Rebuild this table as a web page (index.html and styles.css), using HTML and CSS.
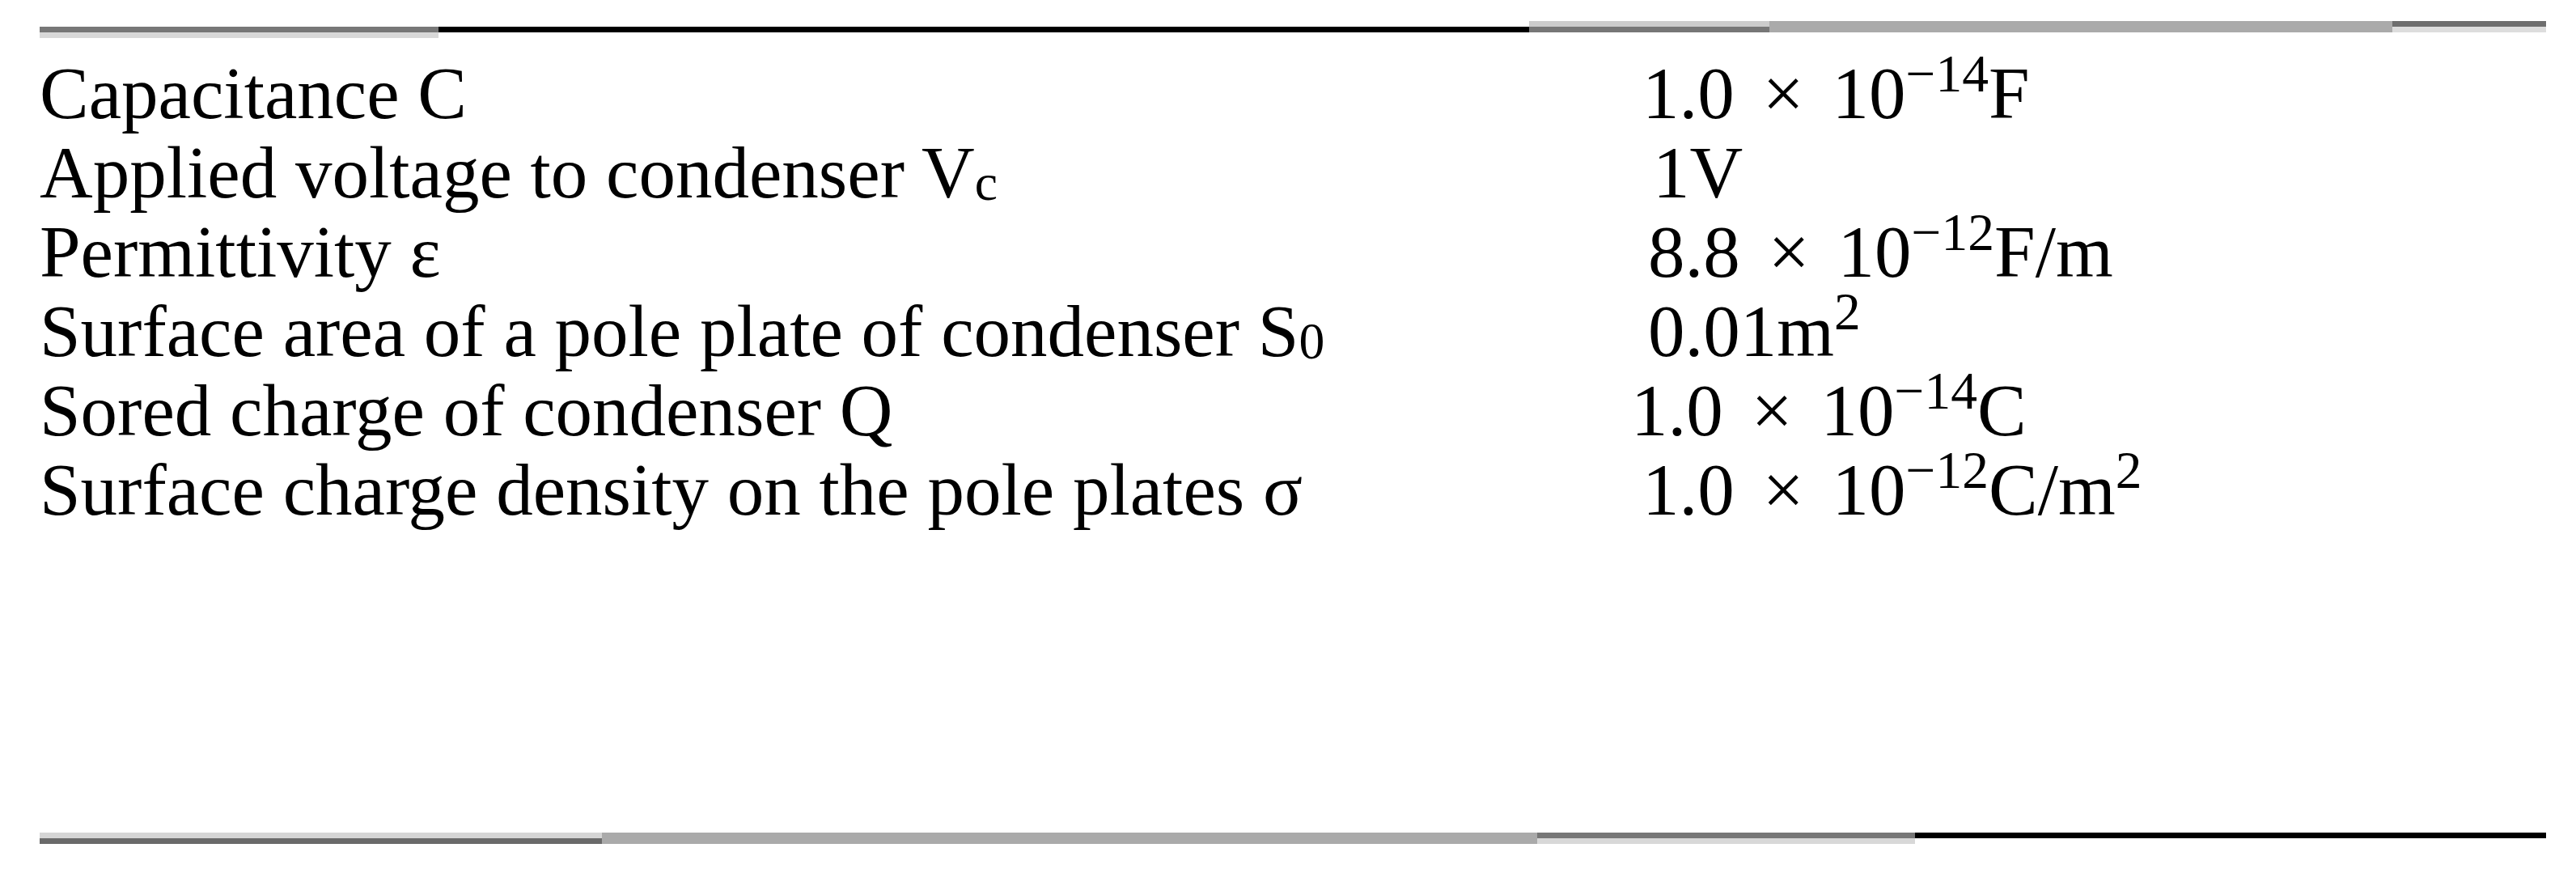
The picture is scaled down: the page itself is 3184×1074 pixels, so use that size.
FILE: index.html
```html
<!DOCTYPE html>
<html lang="en">
<head>
<meta charset="UTF-8">
<meta name="viewport" content="width=device-width, initial-scale=1.0">
<title>Condenser parameters</title>
<link rel="stylesheet" href="styles.css">
</head>
<body>

<div class="sheet">
  <div class="rule rule-top">
    <span class="seg seg-top-1"></span>
    <span class="seg seg-top-2"></span>
    <span class="seg seg-top-3"></span>
    <span class="seg seg-top-4"></span>
    <span class="seg seg-top-5"></span>
  </div>

  <div class="params">
    <div class="param-name">Capacitance C</div>
    <div class="param-value">1.0 &times; 10<sup>&minus;14</sup>F</div>

    <div class="param-name">Applied voltage to condenser V<sub>c</sub></div>
    <div class="param-value shift-2">1V</div>

    <div class="param-name">Permittivity &epsilon;</div>
    <div class="param-value shift-1">8.8 &times; 10<sup>&minus;12</sup>F/m</div>

    <div class="param-name">Surface area of a pole plate of condenser S<sub>0</sub></div>
    <div class="param-value shift-1">0.01m<sup>2</sup></div>

    <div class="param-name">Sored charge of condenser Q</div>
    <div class="param-value shift-back">1.0 &times; 10<sup>&minus;14</sup>C</div>

    <div class="param-name">Surface charge density on the pole plates &sigma;</div>
    <div class="param-value">1.0 &times; 10<sup>&minus;12</sup>C/m<sup>2</sup></div>
  </div>

  <div class="rule rule-bottom">
    <span class="seg seg-bot-1"></span>
    <span class="seg seg-bot-2"></span>
    <span class="seg seg-bot-3"></span>
    <span class="seg seg-bot-4"></span>
  </div>
</div>

</body>
</html>
```

FILE: styles.css
```css
body {
  margin: 0;
  background-color: #fff;
  color: #000;
  font-family: "Liberation Serif", "Times New Roman", serif;
}
.sheet {
  width: 3098px;
  padding: 26px 0 0 49px;
}

/* scanned table rules: each piece keeps its own tone */
.rule {
  display: flex;
  height: 21px;
}
.seg {
  display: block;
  height: 100%;
}
.seg-top-1 {
  width: 493px;
  background: linear-gradient(to bottom, transparent 7px, #777 7px 14px, #d8d8d8 14px 21px);
}
.seg-top-2 {
  width: 1348px;
  background: linear-gradient(to bottom, transparent 7px, #000 7px 14px, transparent 14px);
}
.seg-top-3 {
  width: 297px;
  background: linear-gradient(to bottom, #ccc 0 7px, #777 7px 14px, transparent 14px);
}
.seg-top-4 {
  width: 770px;
  background: linear-gradient(to bottom, #aaa 0 14px, transparent 14px);
}
.seg-top-5 {
  width: 190px;
  background: linear-gradient(to bottom, #6e6e6e 0 7px, #ddd 7px 14px, transparent 14px);
}
.rule-bottom {
  height: 14px;
  margin-top: 374px;
}
.seg-bot-1 {
  width: 695px;
  background: linear-gradient(to bottom, #d5d5d5 0 7px, #6a6a6a 7px 14px);
}
.seg-bot-2 {
  width: 1156px;
  background: #aaa;
}
.seg-bot-3 {
  width: 467px;
  background: linear-gradient(to bottom, #777 0 7px, #d8d8d8 7px 14px);
}
.seg-bot-4 {
  width: 780px;
  background: linear-gradient(to bottom, #000 0 7px, transparent 7px);
}

.params {
  display: grid;
  grid-template-columns: 1981px 1fr;
  margin-top: 20px;
  font-size: 91px;
  line-height: 98px;
}
.param-name {
  white-space: nowrap;
}
.param-value {
  white-space: nowrap;
  word-spacing: 12px;
}
.shift-1 {
  padding-left: 7px;
}
.shift-2 {
  padding-left: 13px;
}
.shift-back {
  margin-left: -14px;
}
sup {
  font-size: 72%;
  line-height: 0;
  vertical-align: 0.5em;
}
sub {
  font-size: 70%;
  line-height: 0;
  vertical-align: -0.05em;
}
```
